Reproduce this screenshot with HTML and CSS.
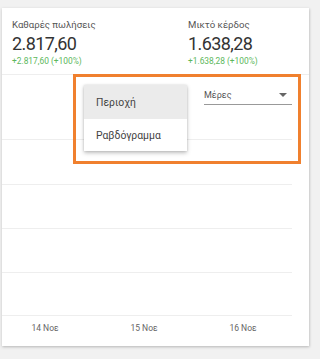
FILE: index.html
```
<!DOCTYPE html>
<html>
<head>
<meta charset="utf-8">
<link rel="stylesheet" href="styles.css">
</head>
<body>
<div class="card">
  <div class="summary">
    <div class="stat">
      <div class="stat-label">Καθαρές πωλήσεις</div>
      <div class="stat-value">2.817,60</div>
      <div class="stat-delta">+2.817,60 (+100%)</div>
    </div>
    <div class="stat">
      <div class="stat-label">Μικτό κέρδος</div>
      <div class="stat-value">1.638,28</div>
      <div class="stat-delta">+1.638,28 (+100%)</div>
    </div>
  </div>
  <div class="chart">
    <div class="toolbar">
      <div class="select">
        <span class="select-text">Μέρες</span>
        <span class="select-arrow"></span>
      </div>
    </div>
    <div class="grid-row r1"></div>
    <div class="grid-row r2"></div>
    <div class="grid-row r3"></div>
    <div class="grid-row r4"></div>
    <div class="axis">
      <span>14 Νοε</span>
      <span>15 Νοε</span>
      <span>16 Νοε</span>
    </div>
    <div class="menu">
      <div class="menu-item active">Περιοχή</div>
      <div class="menu-item">Ραβδόγραμμα</div>
    </div>
    <div class="highlight"></div>
  </div>
</div>
</body>
</html>
```
FILE: styles.css
```
html, body {
  margin: 0;
  padding: 0;
}
body {
  background: #f1f1f1;
  width: 320px;
  height: 359px;
  overflow: hidden;
  font-family: Roboto, "Noto Sans", sans-serif;
  padding-top: 8px;
  padding-left: 2px;
  box-sizing: border-box;
}
.card {
  width: 307px;
  height: 338px;
  background: #fff;
  box-shadow: 0 1px 3px rgba(0,0,0,0.18), 1px 1px 2px rgba(0,0,0,0.08);
  display: flex;
  flex-direction: column;
}
.summary {
  height: 67px;
  border-bottom: 1px solid #eeeeee;
  display: grid;
  grid-template-columns: 176px 1fr;
  padding-left: 10px;
  box-sizing: border-box;
}
.stat {
  padding-top: 11px;
}
.stat-label {
  font-size: 9.6px;
  color: #555;
  line-height: 12px;
}
.stat-value {
  font-size: 18px;
  letter-spacing: -0.6px;
  color: #333;
  line-height: 22px;
  margin-top: 2px;
}
.stat-delta {
  font-size: 8.4px;
  color: #5cb85c;
  line-height: 11px;
  margin-top: 1px;
}
.chart {
  position: relative;
  flex: 1;
  display: flex;
  flex-direction: column;
}
.toolbar {
  width: 290px;
  height: 65px;
  border-bottom: 1px solid #eeeeee;
  display: flex;
  justify-content: flex-end;
  align-items: flex-start;
  box-sizing: border-box;
}
.select {
  width: 88px;
  height: 19px;
  margin-top: 10px;
  border-bottom: 1px solid #999;
  display: flex;
  align-items: center;
  justify-content: space-between;
}
.select-text {
  font-size: 9px;
  color: #555;
}
.select-arrow {
  width: 0;
  height: 0;
  border-left: 4px solid transparent;
  border-right: 4px solid transparent;
  border-top: 4px solid #666;
  margin-right: 5px;
}
.grid-row {
  width: 290px;
  border-bottom: 1px solid #eeeeee;
  box-sizing: border-box;
}
.r1 { height: 45px; }
.r2 { height: 44px; }
.r3 { height: 44px; }
.r4 { height: 43px; }
.axis {
  width: 290px;
  display: flex;
  gap: 39px;
  padding: 7px 0 0 13px;
  box-sizing: border-box;
  font-size: 8.5px;
  color: #666;
}
.axis span {
  width: 60px;
  text-align: center;
}
.menu {
  position: absolute;
  left: 82px;
  top: 10px;
  width: 103px;
  background: #fff;
  box-shadow: 0 2px 4px rgba(0,0,0,0.25), 0 0 2px rgba(0,0,0,0.12);
}
.menu-item {
  height: 32px;
  display: flex;
  align-items: center;
  padding-left: 12px;
  font-size: 10.4px;
  color: #444;
}
.menu-item.active {
  background: #ebebeb;
  height: 34px;
}
.highlight {
  position: absolute;
  left: 71px;
  top: -1px;
  width: 228px;
  height: 90px;
  border: 3px solid #f0802e;
  box-sizing: border-box;
}
```
